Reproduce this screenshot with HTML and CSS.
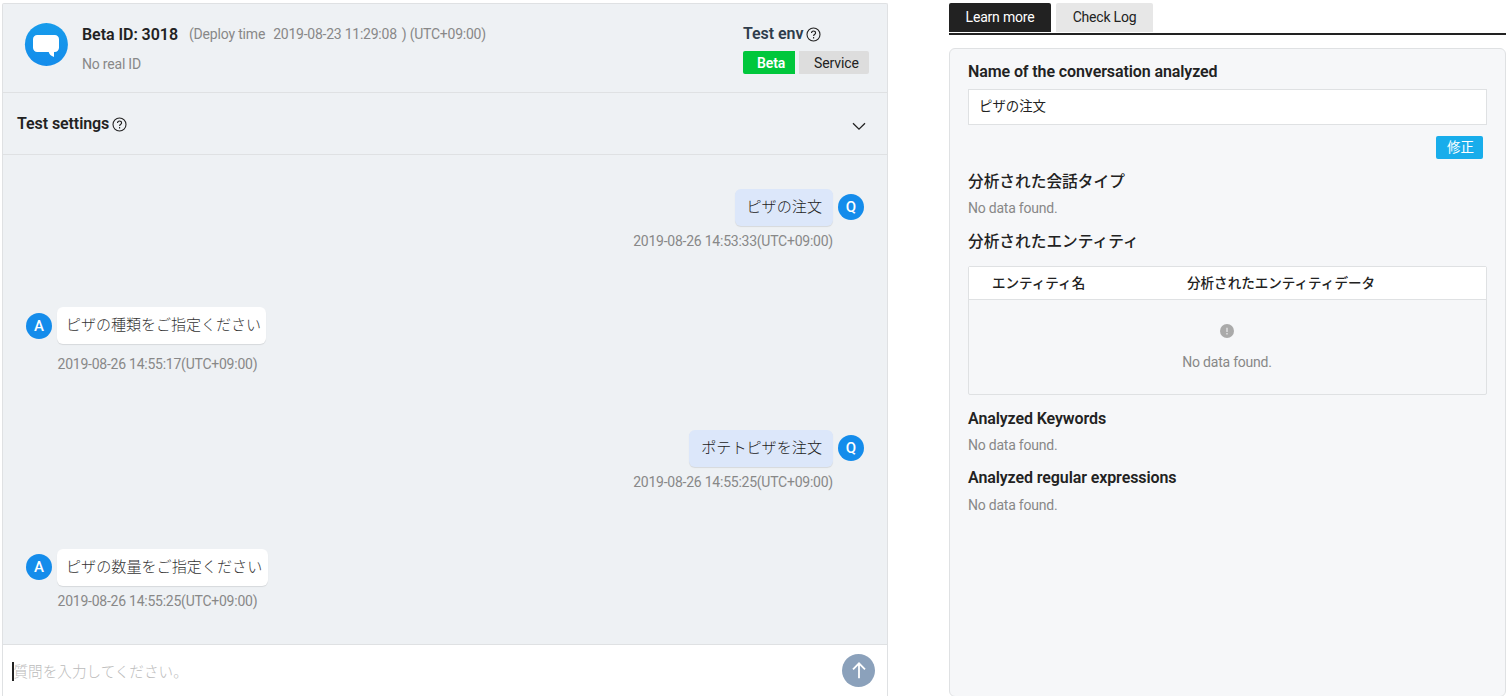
FILE: index.html
```html
<!DOCTYPE html>
<html lang="ja">
<head>
<meta charset="utf-8">
<title>Chatbot test</title>
<link rel="stylesheet" href="styles.css">
</head>
<body>
<div class="page">
  <section class="chat-panel">
    <header class="bot-header">
      <svg class="bot-logo" width="44" height="44" viewBox="0 0 44 44">
        <defs><linearGradient id="logoFill" x1="0" y1="0" x2="0" y2="1"><stop offset="0" stop-color="#179ceb"/><stop offset="1" stop-color="#148ceb"/></linearGradient></defs>
        <circle cx="22.400" cy="21.500" r="21.500" fill="url(#logoFill)"/>
        <path d="M13.200 12h17.600a4.200 4.200 0 0 1 4.200 4.200v8.600a4.200 4.200 0 0 1-4.200 4.200H30V34C27 33 25.200 31.200 24.700 29H13.200a4.200 4.200 0 0 1-4.200-4.200v-8.600a4.200 4.200 0 0 1 4.200-4.200z" fill="#fff"/>
      </svg>
      <div class="bot-info">
        <div class="bot-line"><strong class="bot-id">Beta ID: 3018</strong><span class="deploy">(Deploy time</span><span class="deploy-date">2019-08-23 11:29:08</span><span class="deploy-zone">) (UTC+09:00)</span></div>
        <div class="real-id">No real ID</div>
      </div>
      <div class="env">
        <div class="env-title"><span>Test env</span>
          <svg class="help" width="15" height="15" viewBox="0 0 15 15"><circle cx="7.500" cy="7.500" r="6.500"/><path d="M5.500 6.100C5.500 3.300 9.600 3.400 9.600 5.900C9.600 7.300 7.600 7.300 7.600 9M7.600 10.100v1.400"/></svg>
        </div>
        <div class="env-buttons"><span class="env-btn beta">Beta</span><span class="env-btn service">Service</span></div>
      </div>
    </header>
    <div class="settings">
      <span class="settings-title">Test settings</span>
      <svg class="help" width="15" height="15" viewBox="0 0 15 15"><circle cx="7.500" cy="7.500" r="6.500"/><path d="M5.500 6.100C5.500 3.300 9.600 3.400 9.600 5.900C9.600 7.300 7.600 7.300 7.600 9M7.600 10.100v1.400"/></svg>
      <svg class="chevron" width="14" height="9" viewBox="0 0 14 9"><path d="M1 1.200l6 6 6-6"/></svg>
    </div>
    <div class="messages">
      <div class="msg question first">
        <div class="row"><div class="bubble">ピザの注文</div><span class="avatar">Q</span></div>
        <div class="time">2019-08-26 14:53:33(UTC+09:00)</div>
      </div>
      <div class="msg answer second">
        <div class="row"><span class="avatar">A</span><div class="bubble">ピザの種類をご指定ください</div></div>
        <div class="time">2019-08-26 14:55:17(UTC+09:00)</div>
      </div>
      <div class="msg question third">
        <div class="row"><div class="bubble">ポテトピザを注文</div><span class="avatar">Q</span></div>
        <div class="time">2019-08-26 14:55:25(UTC+09:00)</div>
      </div>
      <div class="msg answer fourth">
        <div class="row"><span class="avatar">A</span><div class="bubble">ピザの数量をご指定ください</div></div>
        <div class="time">2019-08-26 14:55:25(UTC+09:00)</div>
      </div>
    </div>
    <div class="composer">
      <span class="caret"></span><span class="placeholder">質問を入力してください。</span>
      <svg class="send" width="33" height="33" viewBox="0 0 33 33"><circle cx="16.500" cy="16.500" r="16.500" fill="#8ba1bb"/><path d="M17 24.200V9.500M11 15.300l6-6 6 6" fill="none" stroke="#fff" stroke-width="1.800"/></svg>
    </div>
  </section>
  <aside class="side">
    <nav class="tabs"><span class="tab active">Learn more</span><span class="tab log">Check Log</span></nav>
    <div class="analysis">
      <h2 class="heading">Name of the conversation analyzed</h2>
      <div class="name-field">ピザの注文</div>
      <div class="edit-row"><span class="edit">修正</span></div>
      <h2 class="heading ja type-heading">分析された会話タイプ</h2>
      <p class="empty">No data found.</p>
      <h2 class="heading ja entity-heading">分析されたエンティティ</h2>
      <div class="table">
        <div class="thead"><span class="col-name">エンティティ名</span><span class="col-data">分析されたエンティティデータ</span></div>
        <div class="tbody">
          <svg width="14" height="14" viewBox="0 0 14 14"><circle cx="7" cy="7" r="7" fill="#aaa"/><path d="M7 3.700v4.300M7 9.100v1.400" stroke="#e1e2e3" stroke-width="1.400"/></svg>
          <span>No data found.</span>
        </div>
      </div>
      <h2 class="heading keywords">Analyzed Keywords</h2>
      <p class="empty keywords-empty">No data found.</p>
      <h2 class="heading regex">Analyzed regular expressions</h2>
      <p class="empty">No data found.</p>
    </div>
  </aside>
</div>
</body>
</html>
```
FILE: styles.css
```css
* { box-sizing: border-box; }
body { margin: 0; background: #fff; color: #222; font-family: Roboto, "Noto Sans CJK JP", sans-serif; font-size: 14px; overflow: hidden; }
.page { display: flex; height: 696px; padding: 3px 0 0 2px; }
.chat-panel { display: flex; flex-direction: column; width: 886px; height: 693px; border: 1px solid #dfe1e3; border-bottom: 0; border-radius: 2px 2px 0 0; background: #eef1f4; }
.bot-header { display: flex; height: 89px; padding: 18px 18px 0 21px; border-bottom: 1px solid #dfe1e3; }
.bot-logo { margin-top: 1px; }
.bot-info { margin-left: 14px; flex: 1; }
.bot-line { display: flex; align-items: center; height: 24px; white-space: pre; color: #888; letter-spacing: -.24px; }
.bot-id { font-size: 16px; font-weight: 600; color: #222; margin-right: 11px; letter-spacing: -.05px; }
.deploy { margin-right: 8px; letter-spacing: -.18px; }
.deploy-date { margin-right: 5px; }
.real-id { margin-top: 8px; line-height: 20px; color: #888; letter-spacing: -.2px; }
.env { width: 126px; }
.env-title { display: flex; align-items: center; height: 22px; font-size: 16px; font-weight: 600; color: #2f3d4c; letter-spacing: -.06px; }
.help { margin: 1px 0 0 3px; fill: none; stroke: #222; stroke-width: 1.1; }
.env-title .help { margin-top: 3px; }
.env-buttons { display: flex; gap: 4px; margin-top: 7px; }
.env-btn { height: 23px; line-height: 24px; font-weight: 600; }
.beta { width: 52px; padding-left: 14px; color: #fff; background: #00c73c; border-radius: 2px 0 0 2px; letter-spacing: -.1px; }
.service { width: 70px; padding-left: 15px; color: #222; background: #ddd; border-radius: 0 2px 2px 0; font-weight: 400; letter-spacing: -.1px; }
.settings { display: flex; align-items: center; height: 62px; padding: 0 21px 0 14px; border-bottom: 1px solid #dfe1e3; }
.settings-title { font-size: 16px; font-weight: 600; letter-spacing: -.08px; }
.chevron { margin: 5px 0 0 auto; fill: none; stroke: #222; stroke-width: 1.3; }
.messages { flex: 1; padding: 34px 23px 0; }
.row { display: flex; align-items: center; gap: 5px; }
.question .row { justify-content: flex-end; }
.bubble { height: 37px; padding: 0 11px 0 12px; border-radius: 6px; background: #dce7fa; line-height: 36px; font-size: 15.1px; font-weight: 300; box-shadow: 0 1px 1px rgba(0,0,0,.1); }
.answer .bubble { width: 209px; padding: 0 0 0 9px; font-size: 15px; background: #fff; color: #333; white-space: nowrap; }
.answer.fourth .bubble { width: 211px; font-size: 15.1px; }
.avatar { width: 26px; height: 26px; border-radius: 50%; background: #148ceb; color: #fff; text-align: center; line-height: 27px; font-size: 15px; font-weight: 500; }
.question .avatar, .fourth .avatar { margin-bottom: 1px; }
.time { color: #888; line-height: 16px; letter-spacing: -.24px; }
.question .time { text-align: right; padding-right: 31px; margin-top: 7px; }
.answer .time { padding-left: 31.500px; margin-top: 12px; }
.second { margin-top: 58px; }
.third { margin-top: 58px; }
.fourth { margin-top: 59px; }
.fourth .time { margin-top: 7px; }
.composer { display: flex; align-items: center; height: 52px; padding: 0 12px 0 9px; border-top: 1px solid #dfe1e3; background: #fff; }
.caret { width: 1.5px; height: 19px; background: #222; margin-top: 2px; }
.placeholder { color: #bbb; font-size: 14.6px; font-weight: 300; }
.send { margin-left: auto; }
.side { width: 557px; margin-left: 61px; }
.tabs { display: flex; gap: 5px; height: 32px; border-bottom: 2px solid #222; }
.tab { height: 29px; line-height: 29px; text-align: center; border-radius: 2px 2px 0 0; letter-spacing: -.2px; }
.active { width: 102px; background: #222; color: #fff; }
.log { width: 97px; background: #e7e7e7; }
.analysis { display: flow-root; height: 649px; margin-top: 13px; padding: 0 18px; border: 1px solid #dfe1e3; border-radius: 6px; background: #f6f7f9; }
.heading { margin: 12px 0 0; font-size: 16px; line-height: 22px; font-weight: 600; letter-spacing: -.1px; }
.name-field { height: 36px; margin-top: 6px; padding-left: 10px; border: 1px solid #dfe1e3; background: #fff; line-height: 33px; font-size: 13.4px; font-weight: 400; }
.edit-row { display: flex; justify-content: flex-end; padding: 11px 4px 0 0; }
.edit { width: 47px; height: 23px; padding-left: 11px; border-radius: 2px; background: #18adeb; color: #fff; line-height: 22px; font-size: 13.5px; }
.ja { font-size: 15.7px; font-weight: 500; line-height: 24px; letter-spacing: 0; }
.type-heading { margin-top: 11px; }
.empty { margin: 5px 0 0; color: #888; line-height: 18px; letter-spacing: -.22px; }
.entity-heading { margin-top: 13px; }
.table { height: 129px; margin-top: 12px; border: 1px solid #dfe1e3; border-radius: 2px; }
.thead { display: flex; height: 33px; background: #fff; border-bottom: 1px solid #dfe1e3; line-height: 32px; font-size: 13.55px; font-weight: 500; }
.col-name { width: 218px; padding-left: 23px; }
.tbody { display: flex; flex-direction: column; align-items: center; padding: 24px 1px 0 0; color: #888; line-height: 18px; gap: 15px; letter-spacing: -.22px; }
.keywords { margin-top: 13px; }
.keywords-empty { margin-top: 6px; }
.regex { margin-top: 13px; }
.regex + .empty { margin-top: 7px; }
```
